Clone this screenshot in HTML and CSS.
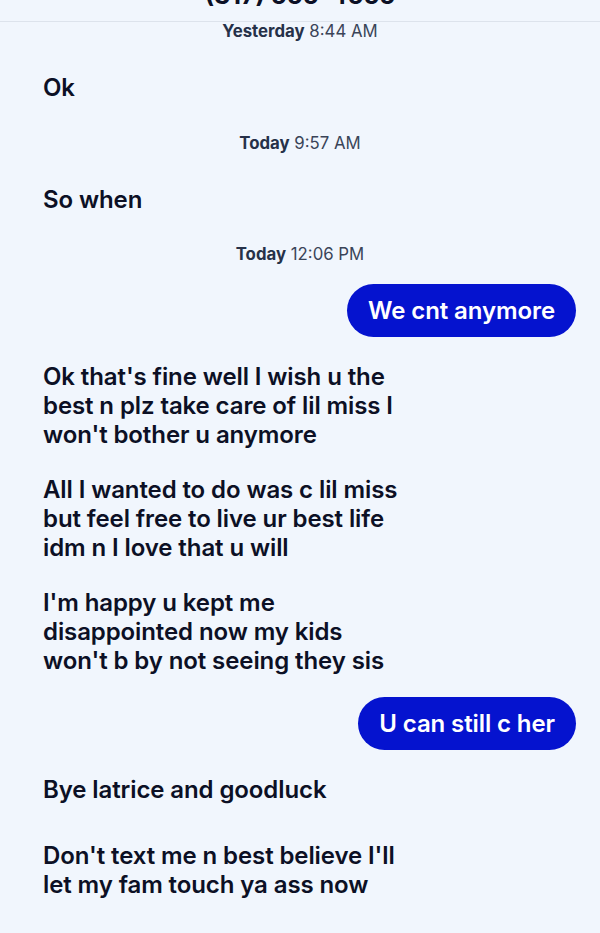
FILE: index.html
```html
<!DOCTYPE html>
<html>
<head>
<meta charset="utf-8">
<link rel="stylesheet" href="styles.css">
</head>
<body>
<div class="screen">
  <header class="header"><div class="title">(317) 555-4555</div></header>
  <main class="thread">
    <div class="ts ts-first"><b>Yesterday</b> 8:44 AM</div>
    <div class="msg in m-after-ts">Ok</div>
    <div class="ts"><b>Today</b> 9:57 AM</div>
    <div class="msg in m-after-ts">So when</div>
    <div class="ts"><b>Today</b> 12:06 PM</div>
    <div class="row-out b-after-ts"><div class="bubble">We cnt anymore</div></div>
    <div class="msg in m-after-b">Ok that's fine well I wish u the best n plz take care of lil miss I won't bother u anymore</div>
    <div class="msg in m-gap">All I wanted to do was c lil miss but feel free to live ur best life idm n I love that u will</div>
    <div class="msg in m-gap">I'm happy u kept me disappointed now my kids won't b by not seeing they sis</div>
    <div class="row-out b-after-m"><div class="bubble">U can still c her</div></div>
    <div class="msg in m-after-b">Bye latrice and goodluck</div>
    <div class="msg in m-gap-lg">Don't text me n best believe I'll let my fam touch ya ass now</div>
  </main>
</div>
</body>
</html>
```
FILE: styles.css
```css
* { box-sizing: border-box; }
html, body { margin: 0; padding: 0; }
body {
  background: #f1f6fd;
  font-family: Inter, "Noto Sans", sans-serif;
  color: #0c1025;
  width: 600px;
  height: 933px;
  overflow: hidden;
}
.screen { display: flex; flex-direction: column; }
.header {
  height: 22px;
  border-bottom: 1px solid #dde3ec;
  overflow: hidden;
  display: flex;
  justify-content: center;
}
.title {
  font-size: 25px;
  font-weight: 700;
  line-height: 25px;
  margin-top: -17px;
  color: #0c1025;
}
.thread {
  display: flex;
  flex-direction: column;
  padding: 0 24px 0 43px;
}
.ts {
  text-align: center;
  font-size: 16.8px;
  line-height: 18px;
  color: #3a4458;
  margin-top: 31.5px;
  margin-left: -19px;
}
.ts b { font-weight: 700; color: #263149; }
.ts-first { margin-top: 0; }
.msg {
  font-size: 24px;
  font-weight: 600;
  line-height: 29px;
  max-width: 362px;
  letter-spacing: -0.1px;
}
.m-after-ts { margin-top: 33px; }
.m-after-b { margin-top: 24.5px; }
.m-gap { margin-top: 26px; }
.m-gap-lg { margin-top: 37px; }
.row-out { display: flex; justify-content: flex-end; }
.b-after-ts { margin-top: 21px; }
.b-after-m { margin-top: 22.5px; }
.bubble {
  background: #0513cf;
  color: #ffffff;
  font-size: 24px;
  font-weight: 600;
  line-height: 29px;
  padding: 12px 21px;
  border-radius: 27px;
  letter-spacing: -0.1px;
}
```
